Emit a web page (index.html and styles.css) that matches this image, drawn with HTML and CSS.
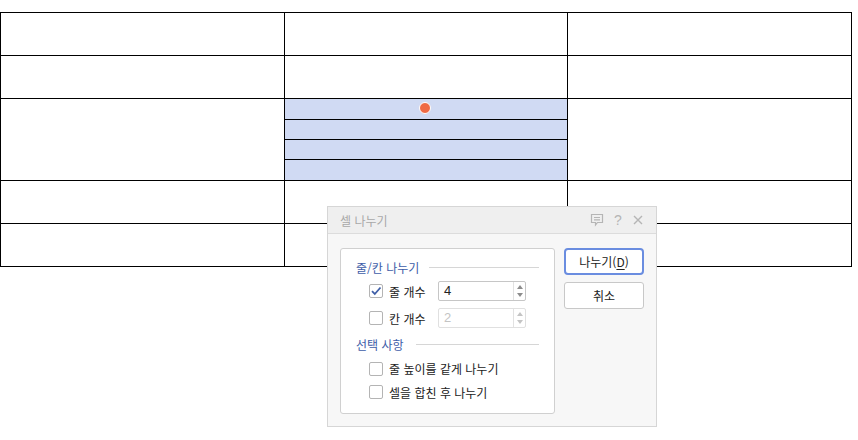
FILE: index.html
```html
<!DOCTYPE html>
<html lang="ko">
<head>
<meta charset="utf-8">
<link rel="stylesheet" href="styles.css">
</head>
<body>
<div class="sheet">
  <div class="grid">
    <div class="cell"></div><div class="cell"></div><div class="cell"></div>
    <div class="cell"></div><div class="cell"></div><div class="cell"></div>
    <div class="cell"></div>
    <div class="split">
      <div class="sub"><span class="dot"></span></div>
      <div class="sub"></div>
      <div class="sub"></div>
      <div class="sub"></div>
    </div>
    <div class="cell"></div>
    <div class="cell"></div><div class="cell"></div><div class="cell"></div>
    <div class="cell"></div><div class="cell"></div><div class="cell"></div>
  </div>
</div>

<div class="dialog">
  <div class="titlebar">
    <span class="title">셀 나누기</span>
    <div class="tools">
      <svg class="ico" width="14" height="14" viewBox="0 0 14 14"><path d="M1.5 1.5h11v8h-5l-2 2.5v-2.5h-4z" fill="none" stroke="#b5b5b5" stroke-width="1.2"/><path d="M4 4.5h6M4 6.8h6" stroke="#b5b5b5" stroke-width="1.2"/></svg>
      <span class="q">?</span>
      <svg class="ico" width="12" height="12" viewBox="0 0 12 12"><path d="M2 2l8 8M10 2l-8 8" stroke="#b5b5b5" stroke-width="1.4"/></svg>
    </div>
  </div>
  <div class="body">
    <div class="group">
      <div class="heading h1"><span>줄/칸 나누기</span><i class="rule"></i></div>
      <div class="row r1">
        <span class="chk on"><svg width="12" height="12" viewBox="0 0 12 12"><path d="M2 6.2l2.8 2.8L10.5 2.5" fill="none" stroke="#3f5fa8" stroke-width="1.8"/></svg></span>
        <span class="lbl">줄 개수</span>
        <span class="spin"><span class="val">4</span><span class="arrows"><i class="up"></i><i class="down"></i></span></span>
      </div>
      <div class="row r2">
        <span class="chk"></span>
        <span class="lbl">칸 개수</span>
        <span class="spin off"><span class="val">2</span><span class="arrows"><i class="up"></i><i class="down"></i></span></span>
      </div>
      <div class="heading h2"><span>선택 사항</span><i class="rule"></i></div>
      <div class="row r3"><span class="chk"></span><span class="lbl">줄 높이를 같게 나누기</span></div>
      <div class="row r4"><span class="chk"></span><span class="lbl">셀을 합친 후 나누기</span></div>
    </div>
    <div class="buttons">
      <button class="btn primary">나누기(<u>D</u>)</button>
      <button class="btn">취소</button>
    </div>
  </div>
</div>
</body>
</html>
```

FILE: styles.css
```css
* { box-sizing: border-box; }
html, body { margin: 0; padding: 0; background: #fff; }
body {
  width: 858px; height: 440px; overflow: hidden; position: relative;
  font-family: "Noto Sans CJK KR", "Noto Sans", sans-serif;
  font-size: 12px; color: #222;
}
.sheet { padding-top: 12px; }
.grid {
  width: 852px;
  display: grid;
  grid-template-columns: 283px 282px 283px;
  grid-template-rows: 42px 42px 81px 42px 42px;
  gap: 1px; padding: 1px; background: #000;
}
.cell { background: #fff; }
.grid > .cell:nth-child(7) { grid-row: 3; grid-column: 1; }
.split {
  display: grid; grid-template-rows: 20px 19px 19px 20px; gap: 1px; background: #000;
}
.sub { background: #d0daf3; position: relative; }
.dot {
  position: absolute; left: 134px; top: 3px; width: 12px; height: 12px;
  border-radius: 50%; background: #ef6a45; border: 1px solid #fff;
}

.dialog {
  position: absolute; left: 327px; top: 206px; width: 330px; height: 221px;
  border: 1px solid #d6d6d6; background: #f7f7f7;
}
.titlebar {
  height: 27px; background: #efefef; border-bottom: 1px solid #dcdcdc;
  display: flex; align-items: center; justify-content: space-between;
  padding: 0 12px 0 12px;
}
.title { color: #a8a8a8; font-size: 12px; }
.tools { display: flex; align-items: center; gap: 9px; }
.q { color: #b5b5b5; font-family: "Liberation Sans", sans-serif; font-size: 14px; width: 10px; text-align: center; }
.ico { display: block; }
.body { display: flex; padding: 14px 0 0 12px; gap: 9px; }
.group {
  width: 215px; height: 166px; background: #fff; border: 1px solid #d0d0d0; border-radius: 3px;
  padding-top: 8px; display: flex; flex-direction: column;
}
.heading {
  display: flex; align-items: center; padding: 0 15px; color: #3e5da8; font-size: 12px;
}
.h1 { height: 20px; }
.h2 { height: 26px; }
.rule { flex: 1; height: 1px; background: #d6d6d6; margin-left: 10px; }
.h2 .rule { margin-left: 12px; }
.row { display: flex; align-items: center; padding-left: 28px; }
.r1 { height: 28px; }
.r2 { height: 26px; }
.r3 { height: 23px; }
.r4 { height: 24px; }
.chk {
  width: 14px; height: 14px; border: 1px solid #b4b4b4; border-radius: 2px; background: #fff;
  display: flex; align-items: center; justify-content: center; flex: none;
}
.lbl { margin-left: 6px; color: #222; }
.r1 .lbl, .r2 .lbl { width: 49px; }
.spin {
  width: 88px; height: 20px; border: 1px solid #c6c6c6; border-radius: 2px; background: #fff;
  display: flex; align-items: stretch;
}
.spin .val { flex: 1; padding-left: 5px; line-height: 18px; font-family: "Liberation Sans", sans-serif; font-size: 13px; color: #222; }
.spin .arrows { width: 12px; border-left: 1px solid #e2e2e2; display: flex; flex-direction: column; justify-content: center; align-items: center; gap: 4px; }
.spin .up { width: 0; height: 0; border-left: 3px solid transparent; border-right: 3px solid transparent; border-bottom: 4px solid #8c8c8c; }
.spin .down { width: 0; height: 0; border-left: 3px solid transparent; border-right: 3px solid transparent; border-top: 4px solid #8c8c8c; }
.spin.off { border-color: #e0e0e0; }
.spin.off .val { color: #c4c4c4; }
.spin.off .up { border-bottom-color: #c4c4c4; }
.spin.off .down { border-top-color: #c4c4c4; }
.buttons { display: flex; flex-direction: column; gap: 7px; }
.btn {
  width: 80px; height: 27px; background: #fff; border: 1px solid #c8c8c8; border-radius: 3px;
  font-family: "Noto Sans CJK KR", sans-serif; font-size: 12px; color: #222; padding: 0;
}
.btn.primary { border: 2px solid #6a8de0; border-radius: 4px; }
.btn u { text-underline-offset: 2px; }
```
